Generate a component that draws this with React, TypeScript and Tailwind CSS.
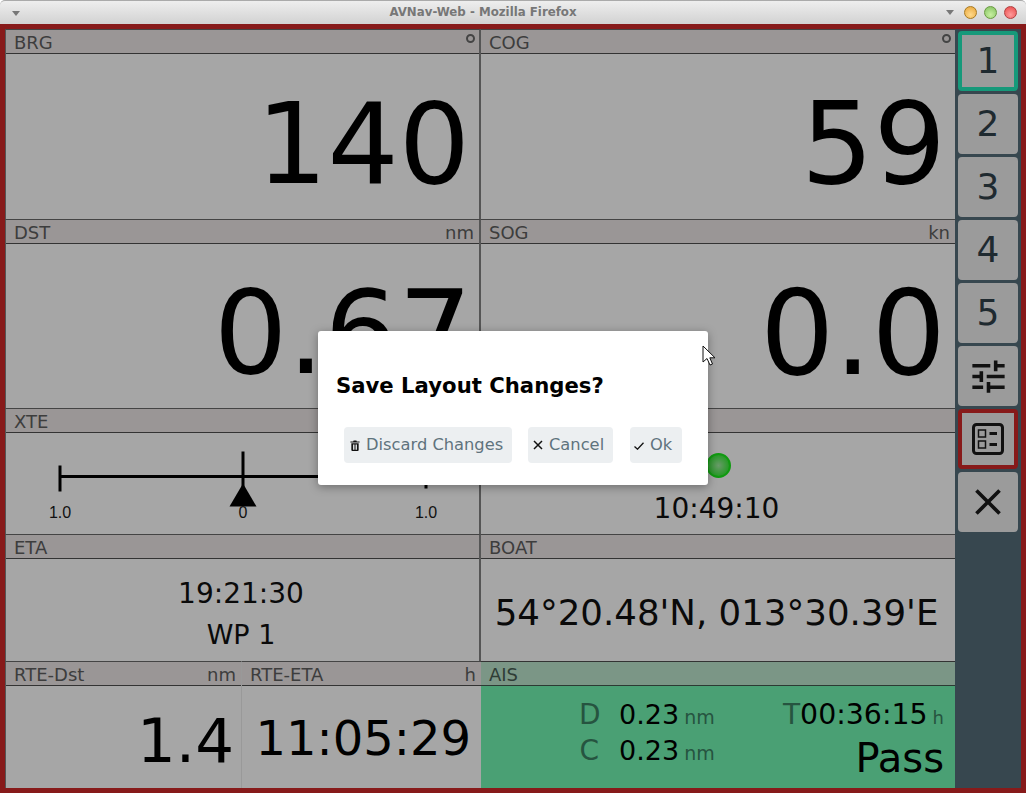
import React from 'react';

const sans = "font-['DejaVu_Sans',sans-serif]";

// one dashboard cell: caption bar on top, value below
const Widget = ({
  caption,
  unit,
  className = '',
  children,
}: {
  caption?: string;
  unit?: React.ReactNode;
  className?: string;
  children?: React.ReactNode;
}) => (
  <div className={`flex flex-col min-w-0 border-t border-[#444] bg-[#a6a6a6] ${className}`}>
    <div className="flex h-[24px] shrink-0 items-center justify-between border-b border-[#333] bg-[#9a9696] pl-2 pr-[5px] pt-[3px] text-[18px] leading-none text-[#3d3d3d]">
      <span>{caption}</span>
      {unit && <span>{unit}</span>}
    </div>
    <div className="flex flex-1 min-h-0 items-center justify-end">{children}</div>
  </div>
);

const BigValue = ({ value, size }: { value: string; size: string }) => (
  <span className={`pt-[14px] leading-none text-black ${size}`}>{value}</span>
);

const Degree = () => (
  <span className="mb-[9px] mr-[-1px] block h-[9px] w-[9px] rounded-full border-2 border-[#444]" />
);

const XteBar = () => (
  <svg viewBox="0 0 473 100" className="h-full w-full text-black">
    <g stroke="#000" strokeWidth="3" fill="none">
      <path d="M54 43H420" />
      <path d="M54 32V58" />
      <path d="M237 18V55" />
      <path d="M420 32V55" />
    </g>
    <path d="M237 50L250.500 73H223.500Z" fill="#000" />
    <g fontFamily="'Liberation Sans',sans-serif" fontSize="16" fill="#111" textAnchor="middle">
      <text x="54" y="84">1.0</text>
      <text x="237" y="84">0</text>
      <text x="420" y="84">1.0</text>
    </g>
  </svg>
);

const TuneIcon = () => (
  <svg viewBox="0 0 24 24" className="h-[43px] w-[43px]" fill="#111">
    <path d="M3 17v2h6v-2H3zM3 5v2h10V5H3zm10 16v-2h8v-2h-8v-2h-2v6h2zM7 9v2H3v2h4v2h2V9H7zm14 4v-2H11v2h10zm-6-4h2V7h4V5h-4V3h-2v6z" />
  </svg>
);

const LayoutIcon = () => (
  <svg viewBox="0 0 32 32" className="h-[32px] w-[32px]" fill="none" stroke="#111">
    <rect x="1.500" y="1.500" width="29" height="29" rx="3" strokeWidth="3" />
    <rect x="6.500" y="7" width="7" height="7" strokeWidth="1.500" />
    <rect x="6.500" y="18" width="7" height="7" strokeWidth="1.500" />
    <path d="M17.500 10.500H25M17.500 21.500H25" strokeWidth="3" />
  </svg>
);

const CloseIcon = ({ className }: { className: string }) => (
  <svg viewBox="0 0 24 24" className={className} fill="#111">
    <path d="M19 6.410 17.590 5 12 10.590 6.410 5 5 6.410 10.590 12 5 17.590 6.410 19 12 13.410 17.590 19 19 17.590 13.410 12z" />
  </svg>
);

const PageButton = ({ className = '', children }: { className?: string; children: React.ReactNode }) => (
  <div className={`flex h-[60px] w-[60px] items-center justify-center rounded-[4px] bg-[#9b9b9b] text-[36px] leading-none text-[#1f2a30] ${className}`}>
    {children}
  </div>
);

const Sidebar = () => (
  <div className="flex w-[66px] shrink-0 flex-col gap-[3px] bg-[#37474f] pl-[3px] pt-[2px]">
    <PageButton className="border-4 border-[#16997a]">1</PageButton>
    <PageButton>2</PageButton>
    <PageButton>3</PageButton>
    <PageButton>4</PageButton>
    <PageButton>5</PageButton>
    <PageButton><TuneIcon /></PageButton>
    <PageButton className="border-4 border-[#871a1a]"><LayoutIcon /></PageButton>
    <PageButton><CloseIcon className="h-[44px] w-[44px]" /></PageButton>
  </div>
);

const TitleBar = () => (
  <div className="relative flex h-[24px] shrink-0 items-center justify-center rounded-t-[5px] border-t border-[#aaa] bg-gradient-to-b from-[#eeeeee] to-[#d2d2d2]">
    <span className="absolute left-[12px] top-[10px] h-0 w-0 border-x-[4px] border-t-[5px] border-x-transparent border-t-[#777]" />
    <span className="ml-[-60px] text-[11.800px] font-bold text-[#777]">AVNav-Web - Mozilla Firefox</span>
    <div className="absolute right-[9px] top-[5px] flex items-center gap-[7px]">
      <span className="mr-[3px] h-0 w-0 border-x-[4px] border-t-[5px] border-x-transparent border-t-[#777]" />
      <span className="h-[13px] w-[13px] rounded-full border border-[#a87a20] bg-[radial-gradient(circle_at_50%_70%,#ffd98a,#e8a53a)]" />
      <span className="h-[13px] w-[13px] rounded-full border border-[#6a9a40] bg-[radial-gradient(circle_at_50%_70%,#c8f0a0,#82c060)]" />
      <span className="h-[13px] w-[13px] rounded-full border border-[#b04040] bg-[radial-gradient(circle_at_50%_70%,#ff9a9a,#e84848)]" />
    </div>
  </div>
);

const DialogButton = ({ icon, label, className = '' }: { icon: React.ReactNode; label: string; className?: string }) => (
  <div className={`flex h-[36px] items-center rounded-[4px] bg-[#eceff1] text-[16.300px] text-[#5f737d] ${className}`}>
    {icon}
    <span className="pt-[1px]">{label}</span>
  </div>
);

const Dialog = () => (
  <div className="absolute left-[318px] top-[331px] flex h-[154px] w-[390px] flex-col rounded-[3px] bg-white shadow-[0_2px_10px_rgba(0,0,0,0.35)]">
    <div className="mt-[42px] pl-[18px] text-[21.200px] font-bold leading-[26px] text-black">Save Layout Changes?</div>
    <div className="mt-[28px] flex pl-[26px]">
      <DialogButton
        className="w-[168px] pl-[6px]"
        label="Discard Changes"
        icon={
          <svg viewBox="0 0 10 12" className="mr-[6px] h-[11px] w-[10px]" fill="#111">
            <path d="M0 1.500H3L3.500 .5H6.500L7 1.500H10V2.800H0ZM1 3.500H9V11C9 11.600 8.500 12 8 12H2C1.500 12 1 11.600 1 11ZM2.800 5V10.500H3.800V5ZM4.500 5V10.500H5.500V5ZM6.200 5V10.500H7.200V5Z" fillRule="evenodd" />
          </svg>
        }
      />
      <DialogButton
        className="ml-[16px] w-[85px] pl-[5px]"
        label="Cancel"
        icon={
          <svg viewBox="0 0 10 10" className="mr-[6px] h-[10px] w-[10px]" stroke="#111" strokeWidth="1.500">
            <path d="M1 1L9 9M9 1L1 9" />
          </svg>
        }
      />
      <DialogButton
        className="ml-[17px] w-[52px] pl-[4px]"
        label="Ok"
        icon={
          <svg viewBox="0 0 10 8" className="mr-[6px] mt-[2px] h-[8px] w-[10px]" fill="none" stroke="#111" strokeWidth="1.300">
            <path d="M.5 4.500L3.500 7.200L9.500 .8" />
          </svg>
        }
      />
    </div>
  </div>
);

const Cursor = () => (
  <svg viewBox="0 0 14 22" className="absolute left-[702px] top-[345px] h-[22px] w-[14px]">
    <path d="M1 1V17L5 13.500L8 20L10.500 19L7.800 12.800H13Z" fill="#fff" stroke="#111" strokeWidth="1" />
  </svg>
);

const leftCell = 'border-l border-r-2 border-l-[#555] border-r-[#555]';

export default function App() {
  return (
    <div className={`relative h-[793px] w-[1026px] overflow-hidden bg-white ${sans}`}>
      <div className="flex h-full flex-col">
        <TitleBar />
        <div className="flex flex-1 min-h-0 border-[5px] border-[#871a1a]">
          <div className="grid w-[950px] shrink-0 grid-cols-[476px_474px] grid-rows-[190px_189px_126px_127px_127px]">
            <Widget caption="BRG" unit={<Degree />} className={leftCell}>
              <BigValue value="140" size="pr-[9px] text-[112px]" />
            </Widget>
            <Widget caption="COG" unit={<Degree />}>
              <BigValue value="59" size="pr-[9px] text-[114px]" />
            </Widget>
            <Widget caption="DST" unit="nm" className={leftCell}>
              <BigValue value="0.67" size="pr-[7px] text-[116px]" />
            </Widget>
            <Widget caption="SOG" unit="kn">
              <BigValue value="0.0" size="pr-[9px] text-[117px]" />
            </Widget>
            <Widget caption="XTE" className={leftCell}>
              <XteBar />
            </Widget>
            <Widget>
              <div className="flex h-full w-full flex-col items-center pt-[20px]">
                <span className="h-[25px] w-[25px] rounded-full border-2 border-[#109a10] bg-[radial-gradient(circle,#6a9a6a,#0c9a0c)]" />
                <span className="mt-[17px] mr-[3px] text-[28px] leading-none text-[#0a0a0a]">10:49:10</span>
              </div>
            </Widget>
            <Widget caption="ETA" className={leftCell}>
              <div className="flex w-full flex-col items-center gap-[13px] pt-[7px] pr-[3px] text-[#0a0a0a]">
                <span className="text-[28px] leading-none">19:21:30</span>
                <span className="text-[27px] leading-none">WP 1</span>
              </div>
            </Widget>
            <Widget caption="BOAT">
              <div className="w-full pt-[6px] pr-[3px] text-center text-[35.600px] leading-none text-[#0a0a0a]">54°20.48'N, 013°30.39'E</div>
            </Widget>
            <div className="grid min-w-0 grid-cols-[237px_239px] border-r-2 border-r-[#555]">
              <Widget caption="RTE-Dst" unit="nm" className="border-l border-l-[#555] border-r border-r-[#999]">
                <span className="pt-[6px] pr-[7px] text-[61px] leading-none text-black">1.4</span>
              </Widget>
              <Widget caption="RTE-ETA" unit="h">
                <span className="pt-[2px] pr-[10px] text-[48px] leading-none text-black">11:05:29</span>
              </Widget>
            </div>
            <div className="flex min-w-0 flex-col border-t border-[#333] bg-[#4aa074]">
              <div className="flex h-[24px] shrink-0 items-center border-b border-[#2c3a33] bg-[#7b9686] pl-2 pt-[3px] text-[18px] leading-none text-[#2f3d36]">AIS</div>
              <div className="flex flex-1 items-start justify-between pt-[15px] pr-[11px] pl-[98px]">
                <div className="flex flex-col gap-[6px]">
                  <div className="flex items-baseline">
                    <span className="w-[20px] text-right text-[28px] leading-[28px] text-[#265440]">D</span>
                    <span className="ml-[20px] text-[27px] leading-[28px] text-black">0.23</span>
                    <span className="ml-[5px] text-[19px] leading-[28px] text-[#265440]">nm</span>
                  </div>
                  <div className="flex items-baseline">
                    <span className="w-[20px] text-right text-[28px] leading-[28px] text-[#265440]">C</span>
                    <span className="ml-[20px] text-[27px] leading-[28px] text-black">0.23</span>
                    <span className="ml-[5px] text-[19px] leading-[28px] text-[#265440]">nm</span>
                  </div>
                </div>
                <div className="flex flex-col items-end">
                  <div className="flex items-baseline">
                    <span className="text-[28px] leading-[28px] text-[#265440]">T</span>
                    <span className="text-[28.400px] leading-[28px] text-black">00:36:15</span>
                    <span className="ml-[5px] text-[18px] leading-[28px] text-[#265440]">h</span>
                  </div>
                  <span className="mt-[4px] text-[40px] leading-[44px] text-black">Pass</span>
                </div>
              </div>
            </div>
          </div>
          <Sidebar />
        </div>
      </div>
      <Dialog />
      <Cursor />
    </div>
  );
}
